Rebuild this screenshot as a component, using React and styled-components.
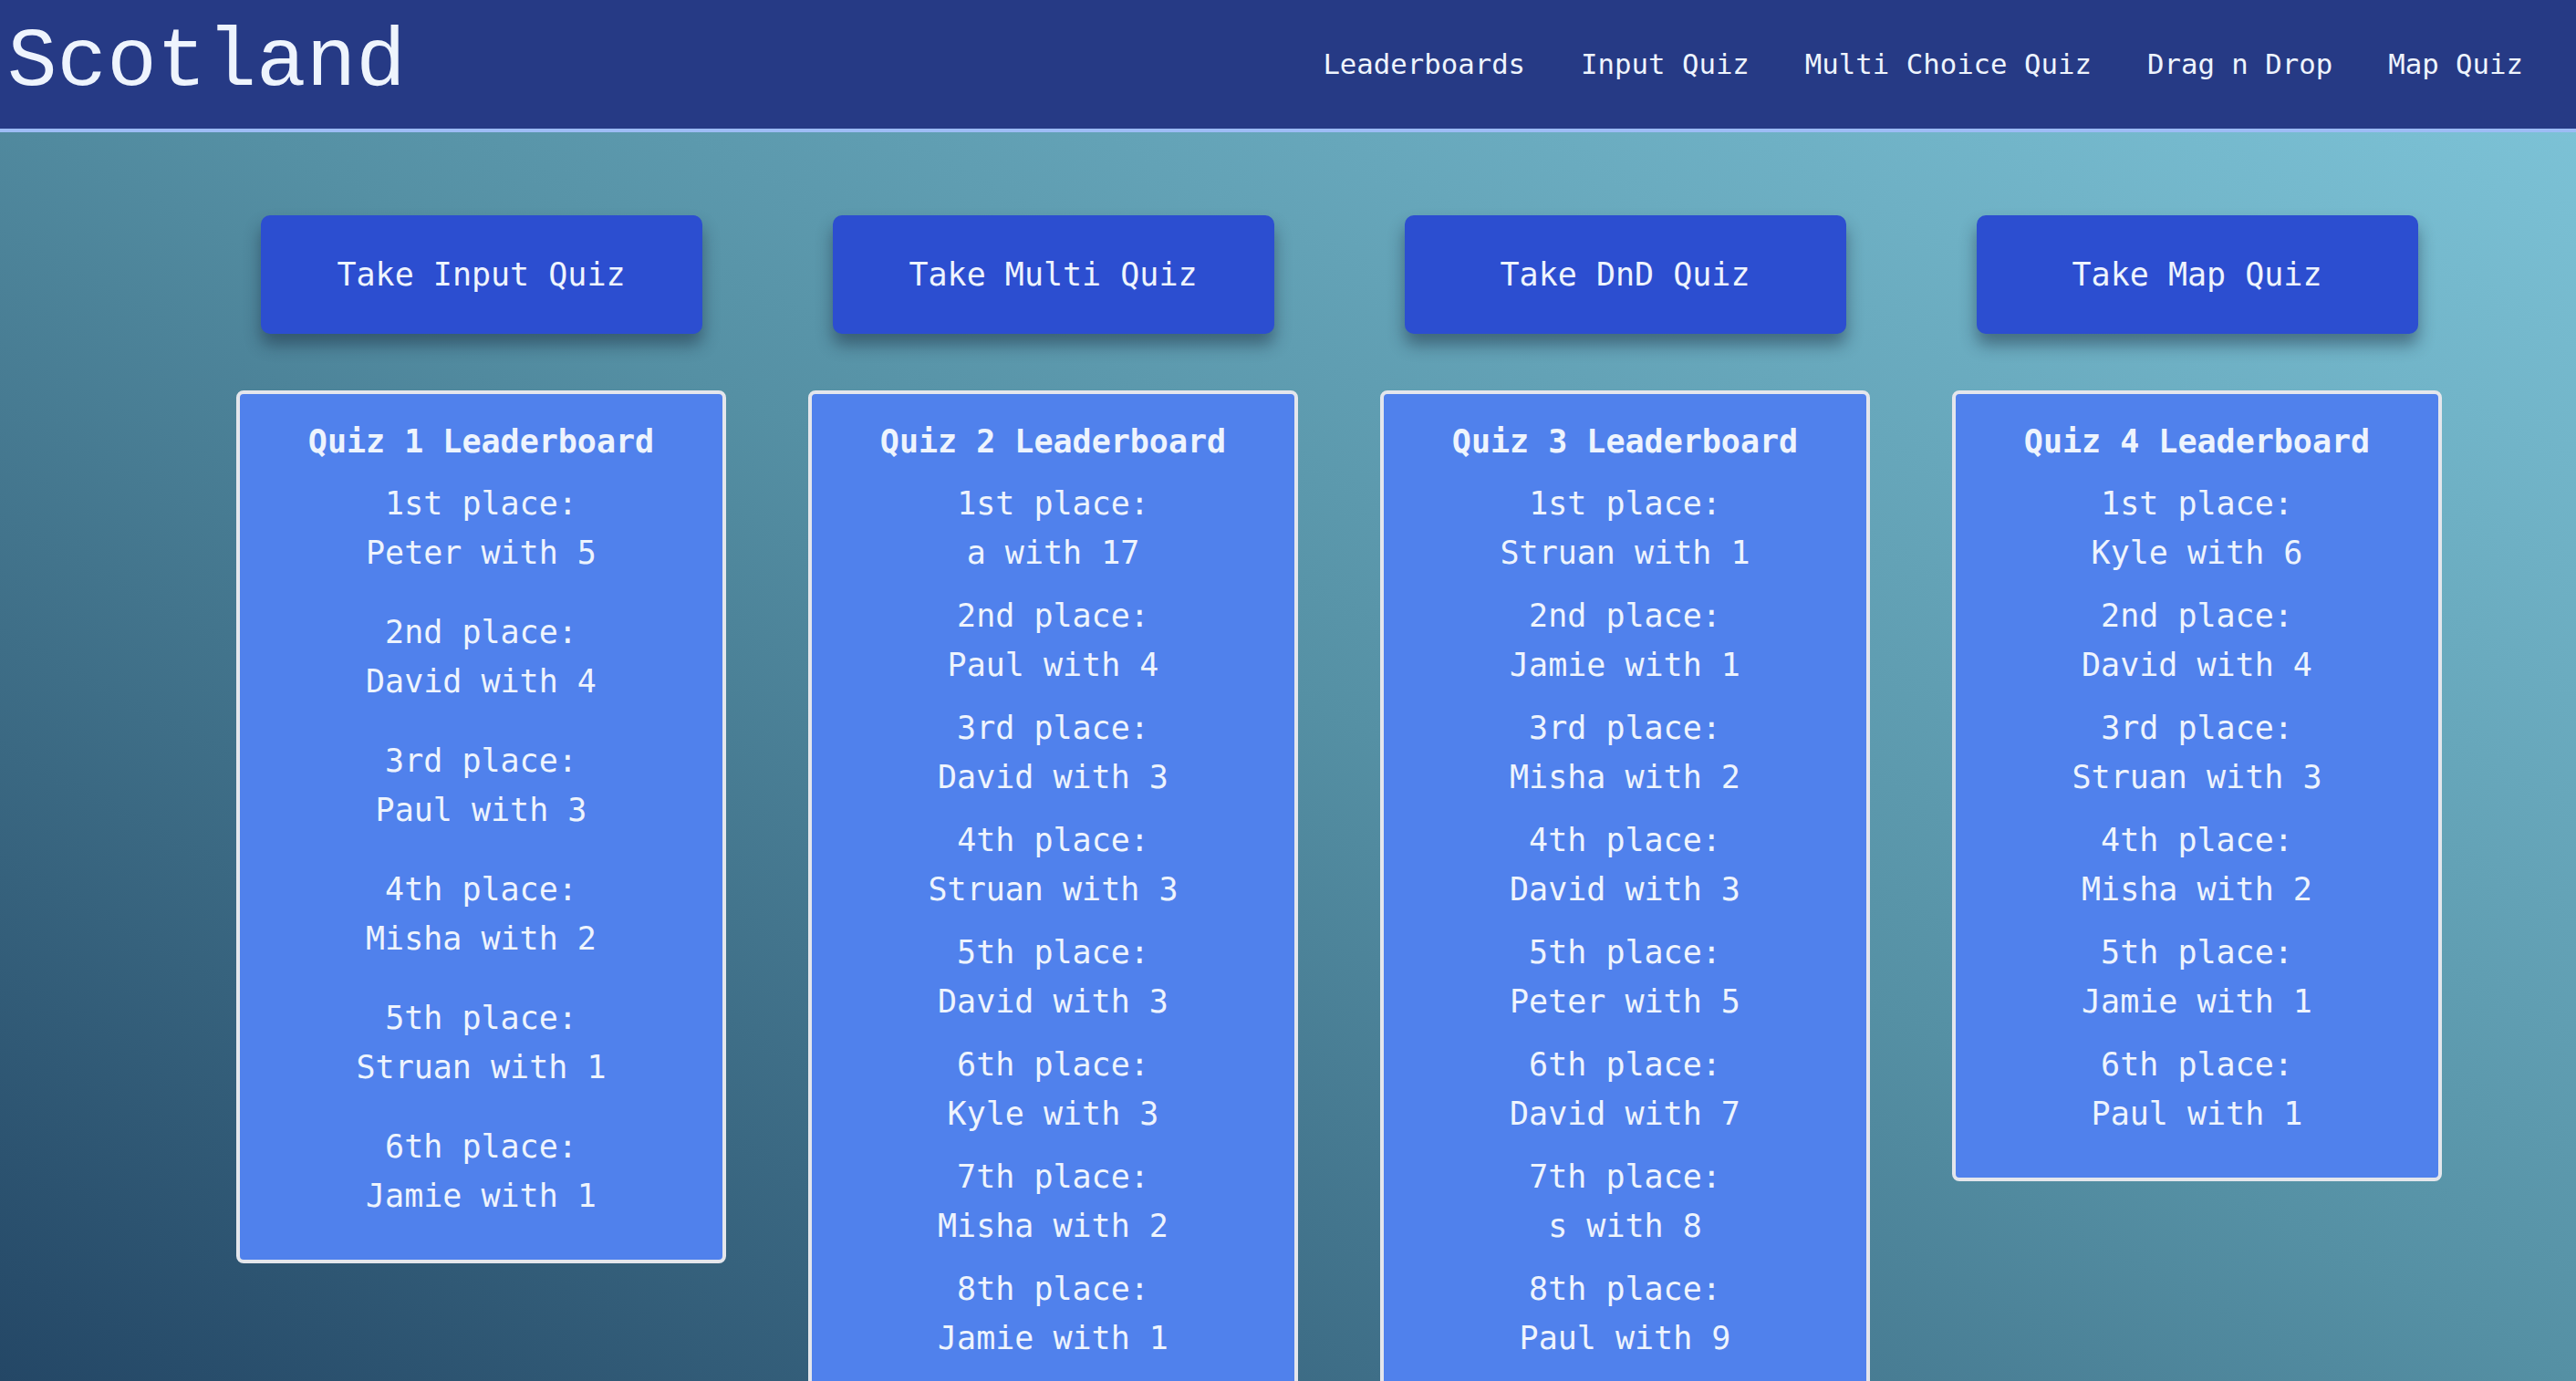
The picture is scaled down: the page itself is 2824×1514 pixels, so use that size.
import React from 'react'
import styled, { createGlobalStyle } from 'styled-components'

const GlobalStyle = createGlobalStyle`
  html, body {
    margin: 0;
    padding: 0;
  }
  body {
    font-family: "DejaVu Sans Mono", "Liberation Mono", monospace;
    color: #eef4fd;
    background: linear-gradient(to top right, #244766 0%, #5590a4 50%, #80c7db 100%);
    background-attachment: fixed;
    min-height: 100vh;
  }
`

const quizzes = [
    {
        id: 1,
        label: 'Take Input Quiz',
        spread: true,
        scores: [['Peter', 5], ['David', 4], ['Paul', 3], ['Misha', 2], ['Struan', 1], ['Jamie', 1]],
    },
    {
        id: 2,
        label: 'Take Multi Quiz',
        scores: [['a', 17], ['Paul', 4], ['David', 3], ['Struan', 3], ['David', 3], ['Kyle', 3], ['Misha', 2], ['Jamie', 1]],
    },
    {
        id: 3,
        label: 'Take DnD Quiz',
        scores: [['Struan', 1], ['Jamie', 1], ['Misha', 2], ['David', 3], ['Peter', 5], ['David', 7], ['s', 8], ['Paul', 9]],
    },
    {
        id: 4,
        label: 'Take Map Quiz',
        scores: [['Kyle', 6], ['David', 4], ['Struan', 3], ['Misha', 2], ['Jamie', 1], ['Paul', 1]],
    },
]

const places = ['1st', '2nd', '3rd', '4th', '5th', '6th', '7th', '8th', '9th', '10th']

function App() {
    return (
        <>
            <GlobalStyle />
            <NavBar>
                <Title>Scotland</Title>
                <Links>
                    <NavLink>Leaderboards</NavLink>
                    <NavLink>Input Quiz</NavLink>
                    <NavLink>Multi Choice Quiz</NavLink>
                    <NavLink>Drag n Drop</NavLink>
                    <NavLink>Map Quiz</NavLink>
                </Links>
            </NavBar>
            <Board>
                {quizzes.map((quiz) => (
                    <Column key={quiz.id}>
                        <QuizButton>{quiz.label}</QuizButton>
                        <Card>
                            <CardTitle>Quiz {quiz.id} Leaderboard</CardTitle>
                            <Places $spread={quiz.spread}>
                                {quiz.scores.map(([name, score], i) => (
                                    <Entry key={i}>
                                        <Line>{places[i]} place:</Line>
                                        <Line>{name} with {score}</Line>
                                    </Entry>
                                ))}
                            </Places>
                        </Card>
                    </Column>
                ))}
            </Board>
        </>
    )
}

const NavBar = styled.header`
    height: 141px;
    box-sizing: content-box;
    background: #263a85;
    border-bottom: 4px solid #9dbcf5;
    display: flex;
    align-items: center;
    justify-content: space-between;
    padding: 0 58px 0 8px;
`

const Title = styled.h1`
    margin: 0;
    margin-top: -4px;
    font-family: "Liberation Mono", "Courier New", monospace;
    font-weight: 400;
    font-size: 91px;
    color: #eef4fd;
`

const Links = styled.nav`
    display: flex;
    gap: 61px;
`

const NavLink = styled.a`
    font-size: 30.7px;
    color: #eef4fd;
    text-decoration: none;
    cursor: pointer;
`

const Board = styled.main`
    display: flex;
    align-items: flex-start;
    gap: 90px;
    padding: 91px 0 0 259px;
`

const Column = styled.section`
    width: 537px;
    display: flex;
    flex-direction: column;
    align-items: center;
`

const QuizButton = styled.button`
    width: 484px;
    height: 130px;
    border: none;
    border-radius: 10px;
    background: #2c4ed0;
    color: #eef4fd;
    font-family: "DejaVu Sans Mono", monospace;
    font-size: 35px;
    box-shadow: 0 12px 18px rgba(20, 30, 50, 0.45);
    cursor: pointer;
    margin-bottom: 62px;
`

const Card = styled.div`
    width: 100%;
    box-sizing: border-box;
    background: #5081ec;
    border: 4px solid #e4e6ec;
    border-radius: 8px;
    padding: 25px 0 43px;
    display: flex;
    flex-direction: column;
    align-items: center;
    text-align: center;
    font-size: 35px;
`

const CardTitle = styled.h2`
    margin: 0 0 14px;
    font-size: 35px;
    font-weight: 700;
    line-height: 54px;
`

const Places = styled.div`
    display: flex;
    flex-direction: column;
    align-items: center;
    gap: ${(props) => (props.$spread ? '33px' : '15px')};
`

const Entry = styled.div`
    display: flex;
    flex-direction: column;
`

const Line = styled.span`
    line-height: 54px;
`

export default App
